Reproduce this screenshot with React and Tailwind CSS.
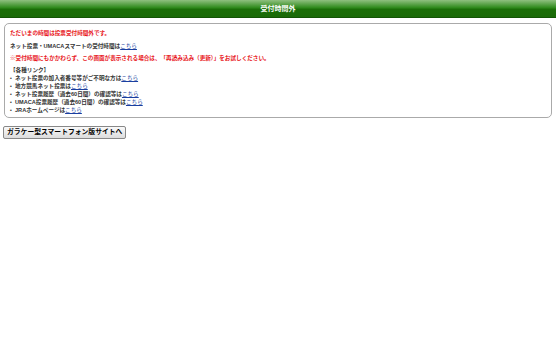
import React from 'react';

const links = [
  ['ネット投票の加入者番号等がご不明な方は', 'こちら'],
  ['地方競馬ネット投票は', 'こちら'],
  ['ネット投票履歴（過去60日間）の確認等は', 'こちら'],
  ['UMACA投票履歴（過去60日間）の確認等は', 'こちら'],
  ['JRAホームページは', 'こちら'],
];

export default function App() {
  return (
    <div className="min-h-[340px] bg-white text-[#333] font-['Liberation_Sans','Noto_Sans_CJK_JP',sans-serif]">
      <header className="h-[18px] flex items-center justify-center bg-[linear-gradient(#8fc07f,#2f8a1c_45%,#1b6e08_55%,#1a6a08)] border-b border-[#135506]">
        <h1 className="text-white text-[7px] font-bold leading-none">受付時間外</h1>
      </header>

      <div className="mx-[4px] mt-[5px] border border-[#aaa] rounded-[5px] px-[5px] pt-[5px] pb-[3px] text-[5.6px] leading-[8px]">
        <p className="text-[#e8161b] font-bold">ただいまの時間は投票受付時間外です。</p>
        <p className="mt-[4.5px] font-bold">
          ネット投票・UMACAスマートの受付時間は<a href="#" className="text-[#1a3fa0] underline font-normal">こちら</a>
        </p>
        <p className="mt-[4.5px] text-[#e8161b] font-bold">※受付時間にもかかわらず、この画面が表示される場合は、「再読み込み（更新）」をお試しください。</p>
        <p className="mt-[4px] font-bold">【各種リンク】</p>
        <ul className="font-bold">
          {links.map(([label, link]) => (
            <li key={label} className="flex items-center h-[8px] leading-[8px]">
              <span className="w-[5px] text-[5px]">•</span>
              <span>
                {label}
                <a href="#" className="text-[#1a3fa0] underline font-normal">{link}</a>
              </span>
            </li>
          ))}
        </ul>
      </div>

      <div className="flex px-[3px] mt-[8px]">
        <button className="h-[13px] px-[3px] border border-[#888] rounded-[2px] bg-[linear-gradient(#fafafa,#dcdcdc)] text-[6.8px] font-bold text-black leading-none">
          ガラケー型スマートフォン版サイトへ
        </button>
      </div>
    </div>
  );
}
